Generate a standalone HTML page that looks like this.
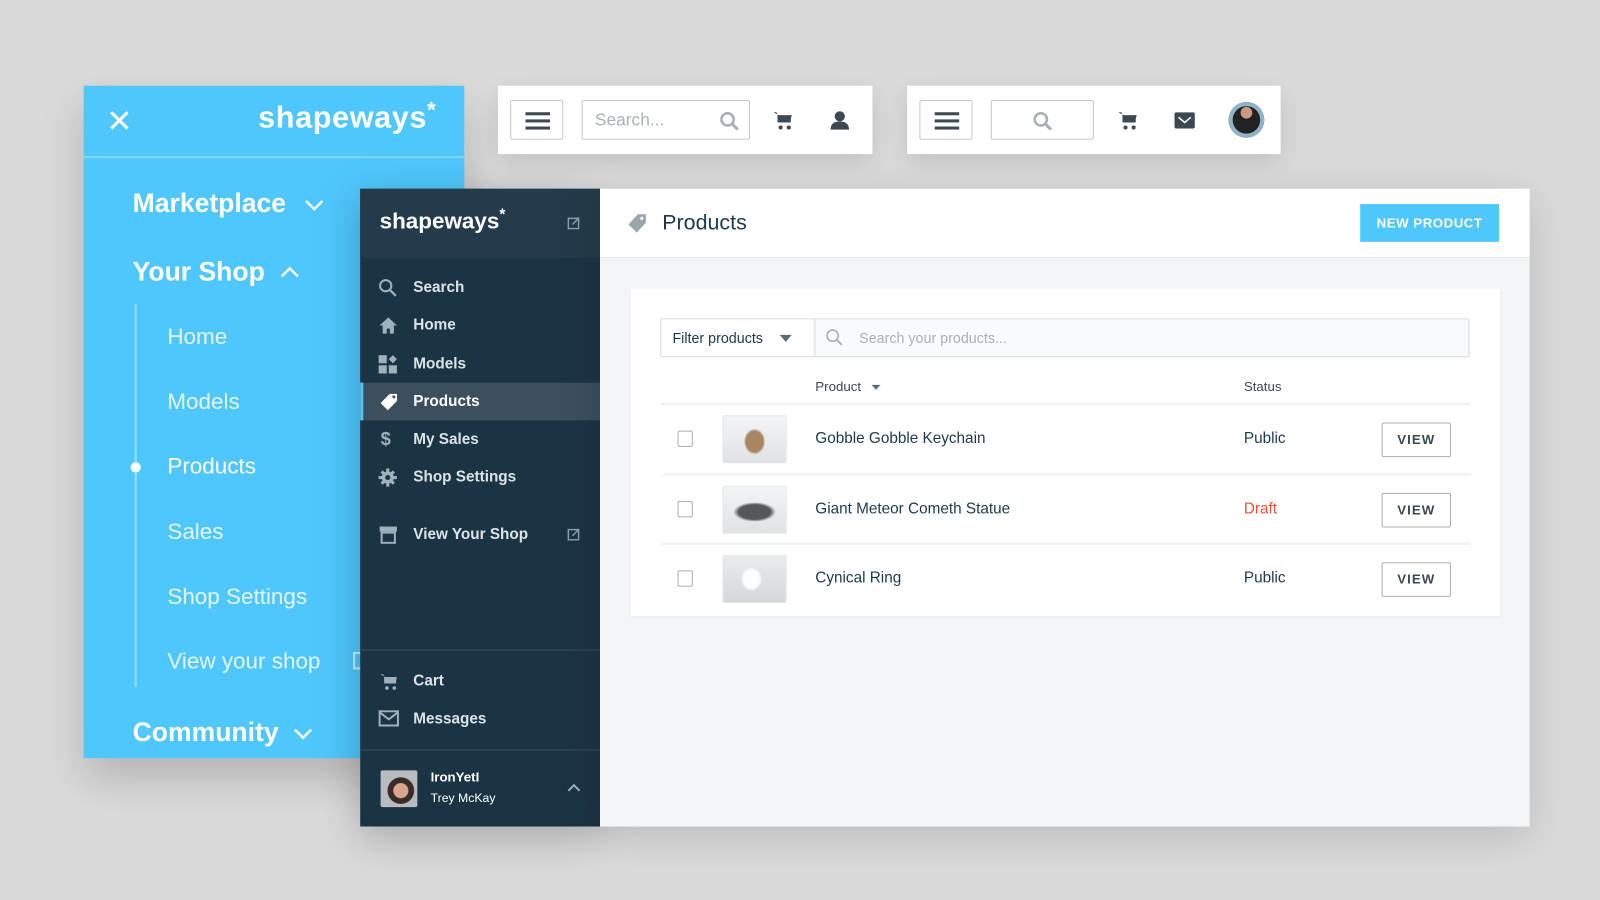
<!DOCTYPE html>
<html><head><meta charset="utf-8"><style>
*{box-sizing:border-box;margin:0;padding:0}
html,body{width:1600px;height:900px;overflow:hidden;background:#dadada;font-family:"Liberation Sans",sans-serif}
#s{position:absolute;left:0;top:0;width:1568px;height:882px;transform:scale(1.0204);transform-origin:0 0}
.a{position:absolute}
.blue{left:82px;top:84px;width:373px;height:659px;background:#4fc7fd;box-shadow:0 20px 40px rgba(0,0,0,.18);color:#fff}
.logo{font-weight:bold;letter-spacing:0px}
.dark{left:353px;top:185px;width:235px;height:625px;background:#1b3444;color:#dfe6ea;box-shadow:0 10px 40px rgba(0,0,0,.25)}
.item{position:absolute;left:0;width:235px;height:37px;font-size:15px;font-weight:bold;line-height:37px;color:#dce3e7}
.item span{position:absolute;left:52px}
.item svg{position:absolute;left:18px;top:10px}
.main{left:588px;top:185px;width:911px;height:625px;background:#f4f5f7;box-shadow:0 10px 40px rgba(0,0,0,.15)}
.bar{background:#fff;box-shadow:0 8px 25px rgba(0,0,0,.12)}
.box{position:absolute;border:1px solid #c5cacd;border-radius:2px;background:#fff}
.ham{width:52px;height:39px}
.ham i{position:absolute;left:14px;width:24px;height:3px;background:#3b4a52}
.row{position:absolute;left:30px;width:793px;height:68px;border-top:2px solid #eef0f2;font-size:15px;color:#1d3a4a}
.cb{position:absolute;left:16px;top:25px;width:15px;height:16px;border:1px solid #a8b0b5;border-radius:2px;background:#fff}
.th{position:absolute;left:60px;top:10px;width:63px;height:47px;border:1px solid #e2e5e7;border-radius:2px;background:linear-gradient(#f2f3f4,#dcdfe1)}
.view{position:absolute;left:706px;top:17px;width:68px;height:34px;border:1px solid #a8b0b5;border-radius:2px;font-size:13px;font-weight:bold;text-align:center;line-height:32px;letter-spacing:1px;color:#3b4a52}
</style></head><body><div id="s">

<div class="a blue">
  <svg class="a" style="left:25px;top:24px" width="20" height="20" viewBox="0 0 20 20"><path d="M2 2L18 18M18 2L2 18" stroke="#fff" stroke-width="3"/></svg>
  <div class="a logo" style="left:171px;top:15px;font-size:30px;letter-spacing:0.6px">shapeways<span style="font-size:22px;vertical-align:top;position:relative;top:-4px">*</span></div>
  <div class="a" style="left:0;top:69px;width:373px;height:2px;background:#80d6fd"></div>
  <div class="a" style="left:48px;top:100px;font-size:26px;font-weight:bold">Marketplace</div>
  <svg class="a" style="left:216px;top:111px" width="20" height="12"><path d="M2 2l8 8 8-8" stroke="#fff" stroke-width="2.4" fill="none"/></svg>
  <div class="a" style="left:48px;top:167px;font-size:26px;font-weight:bold">Your Shop</div>
  <svg class="a" style="left:192px;top:177px" width="20" height="12"><path d="M2 10l8-8 8 8" stroke="#fff" stroke-width="2.4" fill="none"/></svg>
  <div class="a" style="left:50px;top:214px;width:2px;height:375px;background:#9adcfd"></div>
  <div class="a" style="left:46px;top:369px;width:10px;height:10px;border-radius:50%;background:#fff"></div>
  <div class="a" style="left:82px;top:231px;font-size:22px;line-height:30px;color:#e4f5fe">
    <div style="height:64px">Home</div><div style="height:63px">Models</div><div style="height:64px;color:#fff">Products</div><div style="height:64px">Sales</div><div style="height:63px">Shop Settings</div><div>View your shop</div>
  </div>
  <div class="a" style="left:264px;top:555px;width:12px;height:17px;border:2px solid #c8ecfd;border-right:none"></div>
  <div class="a" style="left:48px;top:618px;font-size:26px;font-weight:bold">Community</div>
  <svg class="a" style="left:205px;top:629px" width="20" height="12"><path d="M2 2l8 8 8-8" stroke="#fff" stroke-width="2.4" fill="none"/></svg>
</div>

<div class="a bar" style="left:488px;top:84px;width:367px;height:67px">
  <div class="box ham" style="left:12px;top:14px"><i style="top:11px"></i><i style="top:18px"></i><i style="top:25px"></i></div>
  <div class="box" style="left:82px;top:14px;width:165px;height:39px"><span class="a" style="left:12px;top:9px;font-size:17px;color:#a9b1b6">Search...</span>
    <svg class="a" style="left:134px;top:10px" width="20" height="20"><circle cx="8" cy="8" r="6" stroke="#a9b1b6" stroke-width="2.5" fill="none"/><path d="M12 12l6 6" stroke="#a9b1b6" stroke-width="3"/></svg></div>
  <svg class="a" style="left:269px;top:24px" width="20" height="20" viewBox="0 0 20 20"><path d="M1 2h3l3 10h10l2-7H6" fill="#3b4a52"/><rect x="5" y="5" width="13" height="7" fill="#3b4a52"/><circle cx="8" cy="17" r="2" fill="#3b4a52"/><circle cx="16" cy="17" r="2" fill="#3b4a52"/></svg>
  <svg class="a" style="left:325px;top:24px" width="20" height="20"><circle cx="10" cy="6" r="5" fill="#3b4a52"/><path d="M1 19c0-6 4-8 9-8s9 2 9 8z" fill="#3b4a52"/></svg>
</div>

<div class="a bar" style="left:889px;top:84px;width:366px;height:67px">
  <div class="box ham" style="left:12px;top:14px"><i style="top:11px"></i><i style="top:18px"></i><i style="top:25px"></i></div>
  <div class="box" style="left:82px;top:14px;width:101px;height:39px"><svg class="a" style="left:40px;top:10px" width="20" height="20"><circle cx="8" cy="8" r="6" stroke="#a9b1b6" stroke-width="2.5" fill="none"/><path d="M12 12l6 6" stroke="#a9b1b6" stroke-width="3"/></svg></div>
  <svg class="a" style="left:206px;top:24px" width="20" height="20" viewBox="0 0 20 20"><path d="M1 2h3l3 10h10l2-7H6" fill="#3b4a52"/><rect x="5" y="5" width="13" height="7" fill="#3b4a52"/><circle cx="8" cy="17" r="2" fill="#3b4a52"/><circle cx="16" cy="17" r="2" fill="#3b4a52"/></svg>
  <svg class="a" style="left:262px;top:26px" width="20" height="16"><rect width="20" height="16" rx="2" fill="#3b4a52"/><path d="M4 5l6 5 6-5" stroke="#fff" stroke-width="1.5" fill="none"/></svg>
  <div class="a" style="left:315px;top:16px;width:35px;height:35px;border-radius:50%;background:radial-gradient(circle at 50% 30%,#c99a80 0 18%,#222 20% 100%);box-shadow:inset 0 0 0 4px #8fb4c9"></div>
</div>

<div class="a dark">
  <div class="a" style="left:0;top:0;width:235px;height:68px;background:#233b4a"></div>
  <div class="a logo" style="left:19px;top:19px;font-size:22px;color:#fff">shapeways<span style="font-size:15px;vertical-align:top;position:relative;top:-2px">*</span></div>
  <svg class="a" style="left:203px;top:28px" width="12" height="12"><rect x="1" y="1" width="10" height="10" stroke="#8aa0ad" fill="none" stroke-width="1.4"/><path d="M5 7l6-6M7 1h4v4" stroke="#8aa0ad" stroke-width="1.4" fill="none"/></svg>
  <div class="item" style="top:78px"><svg width="18" height="18"><circle cx="7" cy="7" r="5.5" stroke="#9fb1bb" stroke-width="2" fill="none"/><path d="M11 11l6 6" stroke="#9fb1bb" stroke-width="2.2"/></svg><span>Search</span></div>
  <div class="item" style="top:115px"><svg width="19" height="18"><path d="M9.5 1L1 9h3v8h4v-5h3v5h4V9h3z" fill="#9fb1bb"/></svg><span>Home</span></div>
  <div class="item" style="top:153px"><svg width="19" height="18"><rect x="0" y="0" width="8" height="8" fill="#9fb1bb"/><rect x="0" y="10" width="8" height="8" fill="#9fb1bb"/><rect x="10" y="10" width="8" height="8" fill="#9fb1bb"/><path d="M14 0l4 4-4 4-4-4z" fill="#9fb1bb"/></svg><span>Models</span></div>
  <div class="item" style="top:190px;background:#3b4f5d;border-left:3px solid #4fc7fd;color:#fff"><svg width="19" height="18" style="left:15px"><path d="M11 1h7v7l-9 9-7-7z" fill="#fff"/><circle cx="15" cy="4" r="1.5" fill="#3b4f5d"/></svg><span style="left:49px">Products</span></div>
  <div class="item" style="top:227px"><span style="left:20px;color:#9fb1bb;font-size:18px">$</span><span>My Sales</span></div>
  <div class="item" style="top:264px"><svg width="18" height="18"><circle cx="9" cy="9" r="6" fill="#9fb1bb"/><path d="M9 0v18M0 9h18M3 3l12 12M15 3L3 15" stroke="#9fb1bb" stroke-width="3"/><circle cx="9" cy="9" r="2.5" fill="#1b3444"/></svg><span>Shop Settings</span></div>
  <div class="item" style="top:320px"><svg width="19" height="18"><path d="M1 1h17v5H1z" fill="#9fb1bb"/><path d="M3 7h13v10H3z" stroke="#9fb1bb" stroke-width="2" fill="none"/></svg><span>View Your Shop</span>
    <svg width="12" height="12" style="left:203px;top:13px"><rect x="1" y="1" width="10" height="10" stroke="#8aa0ad" fill="none" stroke-width="1.4"/><path d="M5 7l6-6M7 1h4v4" stroke="#8aa0ad" stroke-width="1.4" fill="none"/></svg></div>
  <div class="a" style="left:0;top:451px;width:235px;height:2px;background:#2a4252"></div>
  <div class="item" style="top:464px"><svg width="20" height="18" viewBox="0 0 20 20"><path d="M1 2h3l3 10h10l2-7H6" fill="#9fb1bb"/><rect x="5" y="5" width="13" height="7" fill="#9fb1bb"/><circle cx="8" cy="17" r="2" fill="#9fb1bb"/><circle cx="16" cy="17" r="2" fill="#9fb1bb"/></svg><span>Cart</span></div>
  <div class="item" style="top:501px"><svg width="20" height="16"><rect x="1" y="1" width="18" height="14" stroke="#9fb1bb" stroke-width="2" fill="none"/><path d="M1 2l9 7 9-7" stroke="#9fb1bb" stroke-width="2" fill="none"/></svg><span>Messages</span></div>
  <div class="a" style="left:0;top:549px;width:235px;height:2px;background:#2a4252"></div>
  <div class="a" style="left:20px;top:570px;width:36px;height:36px;border-radius:2px;background:radial-gradient(circle at 55% 55%,#d9a58c 0 25%,#3a2c28 28% 45%,#b8bcc0 48%)"></div>
  <div class="a" style="left:69px;top:569px;font-size:13px;font-weight:bold;color:#fff">IronYetI</div>
  <div class="a" style="left:69px;top:590px;font-size:12px;color:#fff">Trey McKay</div>
  <svg class="a" style="left:203px;top:583px" width="13" height="8"><path d="M1 7l5.5-5.5L12 7" stroke="#9fb1bb" stroke-width="2" fill="none"/></svg>
</div>

<div class="a main">
  <div class="a" style="left:0;top:0;width:911px;height:68px;background:#fff;border-bottom:1px solid #e3e6e8"></div>
  <svg class="a" style="left:27px;top:24px" width="20" height="20"><path d="M10 1h8v8l-9 10-8-8z" fill="#9aa5ab"/><circle cx="14" cy="5" r="1.6" fill="#fff"/></svg>
  <div class="a" style="left:61px;top:22px;font-size:21px;color:#1d3a4a">Products</div>
  <div class="a" style="left:745px;top:15px;width:136px;height:37px;background:#4fc7fd;color:#fff;font-size:13px;font-weight:bold;text-align:center;line-height:37px;letter-spacing:.5px">NEW PRODUCT</div>
  <div class="a" style="left:30px;top:98px;width:852px;height:321px;background:#fff;box-shadow:0 1px 2px rgba(0,0,0,.08)">
    <div class="a" style="left:29px;top:29px;width:793px;height:38px;border:1px solid #d5d9dc;border-radius:2px;background:#f9fafb">
      <div class="a" style="left:0;top:0;width:151px;height:36px;background:#fff;border-right:1px solid #d5d9dc;font-size:14px;color:#1d3a4a;line-height:36px;padding-left:11px">Filter products</div>
      <svg class="a" style="left:116px;top:15px" width="12" height="7"><path d="M0 0h12L6 7z" fill="#5c6b73"/></svg>
      <svg class="a" style="left:161px;top:9px" width="18" height="18"><circle cx="7" cy="7" r="5.5" stroke="#a9b1b6" stroke-width="1.6" fill="none"/><path d="M11 11l5 5" stroke="#a9b1b6" stroke-width="1.8"/></svg>
      <div class="a" style="left:194px;top:10px;font-size:14px;color:#a9b1b6">Search your products...</div>
    </div>
    <div class="a" style="left:181px;top:88px;font-size:13px;color:#3b4a52">Product</div>
    <svg class="a" style="left:236px;top:94px" width="9" height="5"><path d="M0 0h9L4.5 5z" fill="#5c6b73"/></svg>
    <div class="a" style="left:601px;top:88px;font-size:13px;color:#3b4a52">Status</div>
    <div class="row" style="top:112px"><div class="cb"></div><div class="th" style="background:radial-gradient(ellipse 14px 17px at 50% 55%,#a88660 0 60%,transparent 75%),linear-gradient(#f4f5f6,#dfe1e3)"></div><span class="a" style="left:151px;top:24px">Gobble Gobble Keychain</span><span class="a" style="left:571px;top:24px">Public</span><div class="view">VIEW</div></div>
    <div class="row" style="top:181px"><div class="cb"></div><div class="th" style="background:radial-gradient(ellipse 26px 12px at 50% 55%,#55585b 0 60%,transparent 80%),linear-gradient(#f4f5f6,#dfe1e3)"></div><span class="a" style="left:151px;top:24px">Giant Meteor Cometh Statue</span><span class="a" style="left:571px;top:24px;color:#e8503a">Draft</span><div class="view">VIEW</div></div>
    <div class="row" style="top:249px"><div class="cb"></div><div class="th" style="background:radial-gradient(ellipse 14px 16px at 45% 50%,#fdfdfd 0 55%,transparent 75%),linear-gradient(#e9ebec,#d4d7d9)"></div><span class="a" style="left:151px;top:24px">Cynical Ring</span><span class="a" style="left:571px;top:24px">Public</span><div class="view">VIEW</div></div>
  </div>
</div>
</div></body></html>
